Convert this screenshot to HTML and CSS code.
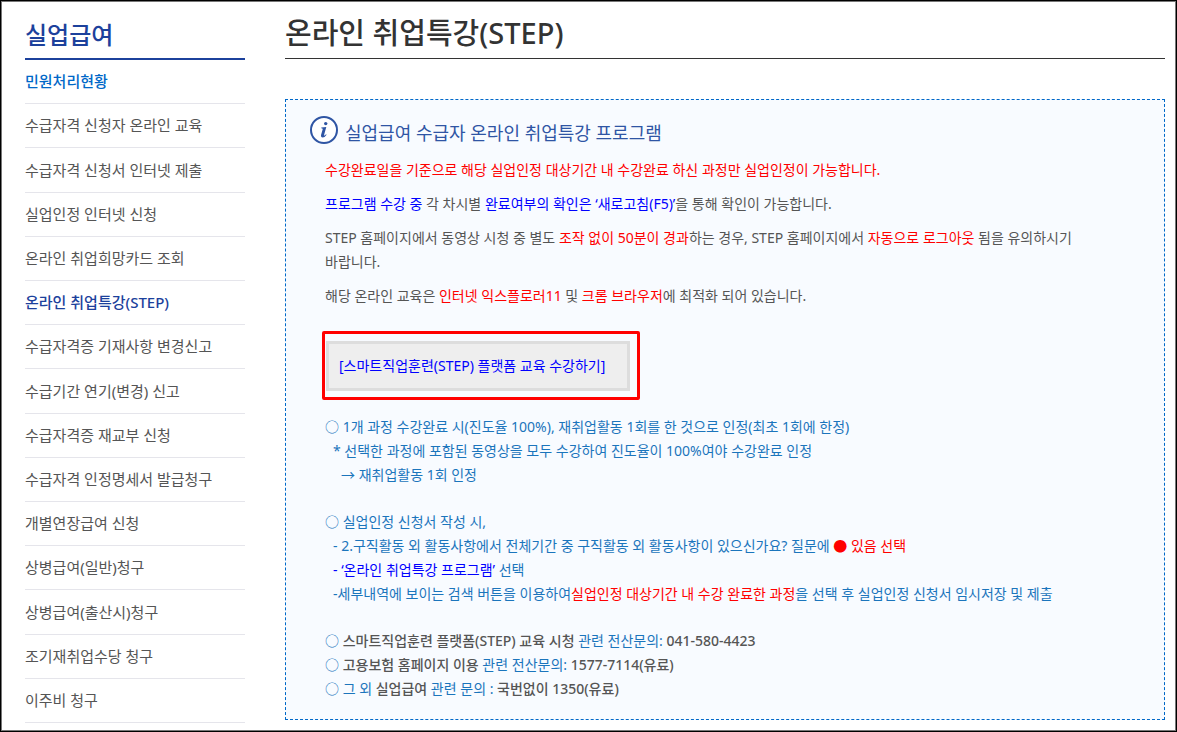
FILE: index.html
```html
<!DOCTYPE html>
<html lang="ko">
<head>
    <meta charset="UTF-8">
    <meta name="viewport" content="width=device-width, initial-scale=1.0">
    <title>온라인 취업특강(STEP)</title>
    <link rel="stylesheet" href="styles.css">
</head>
<body>
    <div class="page">
        <nav class="sidebar">
            <h2>실업급여</h2>
            <ul class="menu">
                <li><a href="#" class="hover">민원처리현황</a></li>
                <li><a href="#">수급자격 신청자 온라인 교육</a></li>
                <li><a href="#">수급자격 신청서 인터넷 제출</a></li>
                <li><a href="#">실업인정 인터넷 신청</a></li>
                <li><a href="#">온라인 취업희망카드 조회</a></li>
                <li><a href="#" class="active">온라인 취업특강(STEP)</a></li>
                <li><a href="#">수급자격증 기재사항 변경신고</a></li>
                <li><a href="#">수급기간 연기(변경) 신고</a></li>
                <li><a href="#">수급자격증 재교부 신청</a></li>
                <li><a href="#">수급자격 인정명세서 발급청구</a></li>
                <li><a href="#">개별연장급여 신청</a></li>
                <li><a href="#">상병급여(일반)청구</a></li>
                <li><a href="#">상병급여(출산시)청구</a></li>
                <li><a href="#">조기재취업수당 청구</a></li>
                <li><a href="#">이주비 청구</a></li>
            </ul>
        </nav>

        <main class="content">
            <h1>온라인 취업특강(STEP)</h1>

            <section class="info-box">
                <h3>
                    <svg class="info-icon" width="28" height="28" viewBox="0 0 28 28" aria-hidden="true">
                        <circle cx="14" cy="14" r="13" fill="#fff" stroke="#2f55a4" stroke-width="2"/>
                        <circle cx="15.7" cy="7.6" r="1.7" fill="#2f55a4"/>
                        <path d="M11.3 11.6 L16.3 11 L14.2 18.6 Q13.9 19.9 14.6 19.6 Q15.3 19.2 16 18.2 L16.6 18.7 Q14.9 21.4 12.7 21.4 Q10.5 21.3 11.1 18.8 L12.7 13.2 Q12.9 12.4 11.2 12.3 Z" fill="#2f55a4"/>
                    </svg>
                    실업급여 수급자 온라인 취업특강 프로그램
                </h3>

                <div class="info-text">
                    <p><span class="red">수강완료일을 기준으로 해당 실업인정 대상기간 내 수강완료 하신 과정만 실업인정이 가능합니다.</span></p>
                    <p><span class="blue">프로그램 수강 중</span> 각 차시별 <span class="blue">완료여부의 확인은 ‘새로고침(F5)’</span>을 통해 확인이 가능합니다.</p>
                    <p>STEP 홈페이지에서 동영상 시청 중 별도 <span class="red">조작 없이 50분이 경과</span>하는 경우, STEP 홈페이지에서 <span class="red">자동으로 로그아웃</span> 됨을 유의하시기 바랍니다.</p>
                    <p>해당 온라인 교육은 <span class="red">인터넷 익스플로러11</span> 및 <span class="red">크롬 브라우저</span>에 최적화 되어 있습니다.</p>

                    <div class="highlight">
                        <a href="#" class="btn-step">[스마트직업훈련(STEP) 플랫폼 교육 수강하기]</a>
                    </div>

                    <ul class="notes">
                        <li>○ 1개 과정 수강완료 시(진도율 100%), 재취업활동 1회를 한 것으로 인정(최초 1회에 한정)</li>
                        <li class="sub">* 선택한 과정에 포함된 동영상을 모두 수강하여 진도율이 100%여야 수강완료 인정</li>
                        <li class="sub2">→ 재취업활동 1회 인정</li>
                    </ul>

                    <ul class="notes">
                        <li>○ 실업인정 신청서 작성 시,</li>
                        <li class="sub">- 2.구직활동 외 활동사항에서 전체기간 중 구직활동 외 활동사항이 있으신가요? 질문에 <span class="red">● 있음 선택</span></li>
                        <li class="sub"><span class="blue">- ‘온라인 취업특강 프로그램’</span> 선택</li>
                        <li class="sub">-세부내역에 보이는 검색 버튼을 이용하여<span class="red">실업인정 대상기간 내 수강 완료한 과정</span>을 선택 후 실업인정 신청서 임시저장 및 제출</li>
                    </ul>

                    <ul class="notes">
                        <li>○ <strong>스마트직업훈련 플랫폼(STEP) 교육 시청</strong> 관련 전산문의: <strong>041-580-4423</strong></li>
                        <li>○ <strong>고용보험 홈페이지 이용</strong> 관련 전산문의: <strong>1577-7114(유료)</strong></li>
                        <li>○ 그 외 <strong>실업급여</strong> 관련 문의 : <strong>국번없이 1350(유료)</strong></li>
                    </ul>
                </div>
            </section>
        </main>
    </div>
</body>
</html>
```
FILE: styles.css
```css
* {
    box-sizing: border-box;
}

body {
    margin: 0;
    font-family: "Noto Sans", "Noto Sans CJK KR", sans-serif;
    font-size: 14px;
    line-height: 24px;
    color: #555;
    background: #fff;
    word-break: keep-all;
}

h1, h2, h3, p, ul {
    margin: 0;
    padding: 0;
}

ul {
    list-style: none;
}

a {
    color: inherit;
    text-decoration: none;
}

.page {
    display: flex;
    gap: 40px;
    min-height: 100vh;
    padding: 8px 11px 8px 24px;
    border: 1px solid #000;
    outline: 1px solid #777;
    outline-offset: -2px;
}

/* left menu */
.sidebar {
    display: flex;
    flex-direction: column;
    flex: 0 0 220px;
}

.sidebar h2 {
    height: 51px;
    border-bottom: 2px solid #1c419c;
    font-size: 24px;
    font-weight: 500;
    line-height: 52px;
    color: #1c419c;
}

.menu {
    display: flex;
    flex-direction: column;
    flex: 1;
}

.menu li {
    display: flex;
    align-items: center;
    flex: 1;
    padding-bottom: 1px;
    border-bottom: 1px solid #e5e5eb;
    font-size: 15px;
}

.menu .hover {
    font-weight: 500;
    color: #0068c8;
}

.menu .active {
    font-weight: 500;
    color: #1c419c;
}

/* content */
.content {
    flex: 1;
    min-width: 0;
}

h1 {
    height: 50px;
    border-bottom: 1px solid #333;
    font-size: 29px;
    font-weight: 500;
    line-height: 48px;
    color: #333;
}

.info-box {
    margin-top: 40px;
    padding: 16px 40px 18px 24px;
    border: 1px dashed #0068c8;
    background: #f8fbff;
}

.info-box h3 {
    display: flex;
    align-items: center;
    gap: 7px;
    font-size: 18px;
    font-weight: 400;
    line-height: 34px;
    color: #2f55a4;
}

.info-icon {
    flex: none;
    margin-bottom: 6px;
}

.info-text {
    padding: 8px 0 0 15px;
}

.info-text p {
    margin-bottom: 10px;
}

.red {
    color: #f00;
}

.blue {
    color: #00f;
}

.highlight {
    display: table;
    margin: 23px 0 15px -3px;
    padding: 7px 7px 6px 1px;
    border: 3px solid #f00;
    border-radius: 2px;
}

.btn-step {
    display: block;
    padding: 10px 22px 10px 10px;
    border: 3px solid #ddd;
    background: #eee;
    color: #00f;
}

.notes {
    margin-bottom: 23px;
    color: #1b75bc;
}

.notes:last-child {
    margin-bottom: 0;
}

.notes .sub {
    padding-left: 8px;
}

.notes .sub2 {
    padding-left: 16px;
}

.notes strong {
    font-weight: 500;
    color: #555;
}
```
